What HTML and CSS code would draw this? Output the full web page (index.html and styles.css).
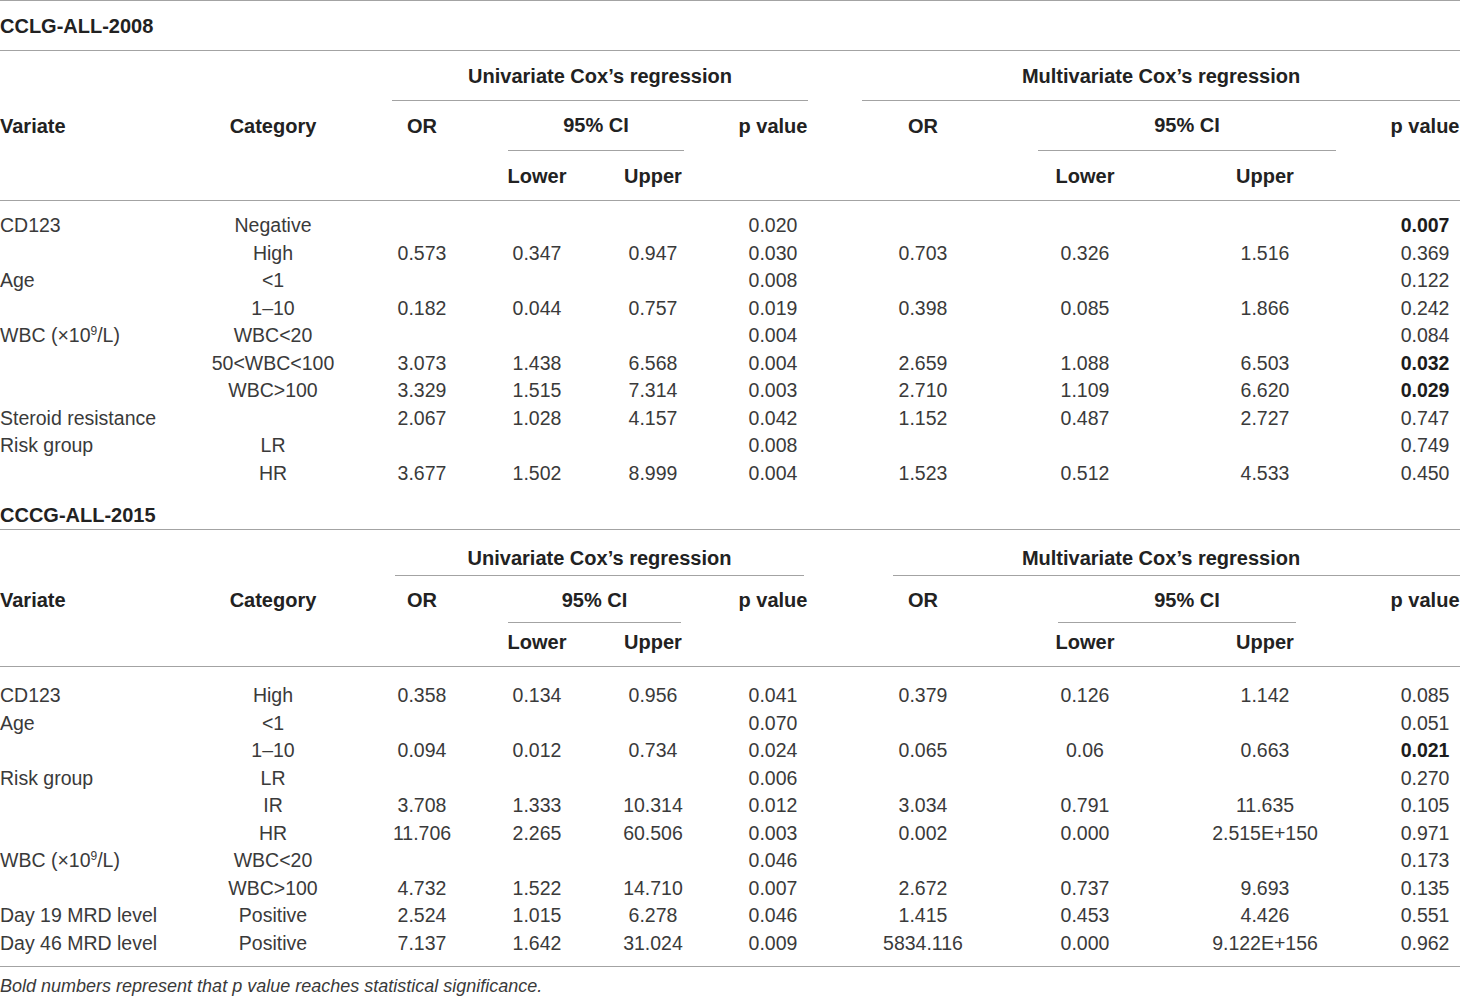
FILE: index.html
```html
<!DOCTYPE html>
<html lang="en">
<head>
<meta charset="utf-8">
<title>Cox regression</title>
<link rel="stylesheet" href="styles.css">
</head>
<body>
<table class="tbl s1">
<colgroup>
<col class="c1"><col class="c2"><col class="c3"><col class="c4"><col class="c5"><col class="c6"><col class="c7"><col class="c8"><col class="c9"><col class="c10">
</colgroup>
<thead>
<tr class="title-row"><th colspan="10" class="title">CCLG-ALL-2008</th></tr>
<tr class="grp-row">
<th colspan="2"></th>
<th colspan="4" class="grp"><div class="rule uni">Univariate Cox’s regression</div></th>
<th colspan="4" class="grp"><div class="rule multi">Multivariate Cox’s regression</div></th>
</tr>
<tr class="hd-row">
<th class="left">Variate</th><th>Category</th><th>OR</th>
<th colspan="2" class="grp"><div class="rule ci">95% CI</div></th>
<th>p value</th><th>OR</th>
<th colspan="2" class="grp"><div class="rule mci">95% CI</div></th>
<th>p value</th>
</tr>
<tr class="sub-row">
<th></th><th></th><th></th><th>Lower</th><th>Upper</th><th></th><th></th><th>Lower</th><th>Upper</th><th></th>
</tr>
</thead>
<tbody>
<tr class="first"><td class="left">CD123</td><td>Negative</td><td></td><td></td><td></td><td>0.020</td><td></td><td></td><td></td><td class="b">0.007</td></tr>
<tr><td class="left"></td><td>High</td><td>0.573</td><td>0.347</td><td>0.947</td><td>0.030</td><td>0.703</td><td>0.326</td><td>1.516</td><td>0.369</td></tr>
<tr><td class="left">Age</td><td>&lt;1</td><td></td><td></td><td></td><td>0.008</td><td></td><td></td><td></td><td>0.122</td></tr>
<tr><td class="left"></td><td>1–10</td><td>0.182</td><td>0.044</td><td>0.757</td><td>0.019</td><td>0.398</td><td>0.085</td><td>1.866</td><td>0.242</td></tr>
<tr><td class="left">WBC (×10<sup>9</sup>/L)</td><td>WBC&lt;20</td><td></td><td></td><td></td><td>0.004</td><td></td><td></td><td></td><td>0.084</td></tr>
<tr><td class="left"></td><td>50&lt;WBC&lt;100</td><td>3.073</td><td>1.438</td><td>6.568</td><td>0.004</td><td>2.659</td><td>1.088</td><td>6.503</td><td class="b">0.032</td></tr>
<tr><td class="left"></td><td>WBC&gt;100</td><td>3.329</td><td>1.515</td><td>7.314</td><td>0.003</td><td>2.710</td><td>1.109</td><td>6.620</td><td class="b">0.029</td></tr>
<tr><td class="left">Steroid resistance</td><td></td><td>2.067</td><td>1.028</td><td>4.157</td><td>0.042</td><td>1.152</td><td>0.487</td><td>2.727</td><td>0.747</td></tr>
<tr><td class="left">Risk group</td><td>LR</td><td></td><td></td><td></td><td>0.008</td><td></td><td></td><td></td><td>0.749</td></tr>
<tr><td class="left"></td><td>HR</td><td>3.677</td><td>1.502</td><td>8.999</td><td>0.004</td><td>1.523</td><td>0.512</td><td>4.533</td><td>0.450</td></tr>
</tbody>
</table>

<table class="tbl s2">
<colgroup>
<col class="c1"><col class="c2"><col class="c3"><col class="c4"><col class="c5"><col class="c6"><col class="c7"><col class="c8"><col class="c9"><col class="c10">
</colgroup>
<thead>
<tr class="title-row"><th colspan="10" class="title">CCCG-ALL-2015</th></tr>
<tr class="grp-row">
<th colspan="2"></th>
<th colspan="4" class="grp"><div class="rule uni">Univariate Cox’s regression</div></th>
<th colspan="4" class="grp"><div class="rule multi">Multivariate Cox’s regression</div></th>
</tr>
<tr class="hd-row">
<th class="left">Variate</th><th>Category</th><th>OR</th>
<th colspan="2" class="grp"><div class="rule ci">95% CI</div></th>
<th>p value</th><th>OR</th>
<th colspan="2" class="grp"><div class="rule mci">95% CI</div></th>
<th>p value</th>
</tr>
<tr class="sub-row">
<th></th><th></th><th></th><th>Lower</th><th>Upper</th><th></th><th></th><th>Lower</th><th>Upper</th><th></th>
</tr>
</thead>
<tbody>
<tr class="first"><td class="left">CD123</td><td>High</td><td>0.358</td><td>0.134</td><td>0.956</td><td>0.041</td><td>0.379</td><td>0.126</td><td>1.142</td><td>0.085</td></tr>
<tr><td class="left">Age</td><td>&lt;1</td><td></td><td></td><td></td><td>0.070</td><td></td><td></td><td></td><td>0.051</td></tr>
<tr><td class="left"></td><td>1–10</td><td>0.094</td><td>0.012</td><td>0.734</td><td>0.024</td><td>0.065</td><td>0.06</td><td>0.663</td><td class="b">0.021</td></tr>
<tr><td class="left">Risk group</td><td>LR</td><td></td><td></td><td></td><td>0.006</td><td></td><td></td><td></td><td>0.270</td></tr>
<tr><td class="left"></td><td>IR</td><td>3.708</td><td>1.333</td><td>10.314</td><td>0.012</td><td>3.034</td><td>0.791</td><td>11.635</td><td>0.105</td></tr>
<tr><td class="left"></td><td>HR</td><td>11.706</td><td>2.265</td><td>60.506</td><td>0.003</td><td>0.002</td><td>0.000</td><td>2.515E+150</td><td>0.971</td></tr>
<tr><td class="left">WBC (×10<sup>9</sup>/L)</td><td>WBC&lt;20</td><td></td><td></td><td></td><td>0.046</td><td></td><td></td><td></td><td>0.173</td></tr>
<tr><td class="left"></td><td>WBC&gt;100</td><td>4.732</td><td>1.522</td><td>14.710</td><td>0.007</td><td>2.672</td><td>0.737</td><td>9.693</td><td>0.135</td></tr>
<tr><td class="left">Day 19 MRD level</td><td>Positive</td><td>2.524</td><td>1.015</td><td>6.278</td><td>0.046</td><td>1.415</td><td>0.453</td><td>4.426</td><td>0.551</td></tr>
<tr class="last"><td class="left">Day 46 MRD level</td><td>Positive</td><td>7.137</td><td>1.642</td><td>31.024</td><td>0.009</td><td>5834.116</td><td>0.000</td><td>9.122E+156</td><td>0.962</td></tr>
</tbody>
</table>
<p class="note">Bold numbers represent that p value reaches statistical significance.</p>
</body>
</html>
```

FILE: styles.css
```css
* { box-sizing: border-box; }
html, body { margin: 0; padding: 0; background: #fff; }
body {
  width: 1460px;
  height: 997px;
  overflow: hidden;
  font-family: "Liberation Sans", Arial, Helvetica, sans-serif;
  color: #3a3a3a;
}
.tbl {
  width: 1460px;
  table-layout: fixed;
  border-collapse: separate;
  border-spacing: 0;
}
.c1 { width: 200px; }
.c2 { width: 146px; }
.c3 { width: 152px; }
.c4 { width: 78px; }
.c5 { width: 154px; }
.c6 { width: 86px; }
.c7 { width: 214px; }
.c8 { width: 110px; }
.c9 { width: 250px; }
.c10 { width: 70px; }

th, td {
  padding: 0;
  text-align: center;
  vertical-align: middle;
  white-space: nowrap;
}
th {
  font-size: 20px;
  font-weight: bold;
  color: #222;
  line-height: 22px;
}
td {
  font-size: 19.5px;
  font-weight: normal;
  height: 27.5px;
  line-height: 27.5px;
}
.left { text-align: left; }
td.b { font-weight: bold; color: #1c1c1c; }
sup { font-size: 12px; line-height: 0; vertical-align: 7px; }

.title { text-align: left; }
.rule { border-bottom: 1px solid #a3a3a3; }
.grp { vertical-align: bottom; }

/* section 1 */
.s1 .title-row th {
  height: 51px;
  border-top: 1px solid #a3a3a3;
  border-bottom: 1px solid #a3a3a3;
}
.s1 .grp-row th { height: 50px; }
.s1 .grp-row .rule { padding-bottom: 13px; }
.s1 .uni { margin: 0 8px 0 46px; }
.s1 .multi { margin: 0 0 0 46px; }
.s1 .hd-row th { height: 50px; }
.s1 .hd-row .rule { padding-bottom: 14px; }
.s1 .ci { margin: 0 46px 0 10px; }
.s1 .mci { margin: 0 54px 0 8px; }
.s1 .sub-row th { height: 50px; border-bottom: 1px solid #a3a3a3; }
.s1 tr.first td { height: 38.75px; padding-top: 11.25px; }

/* section 2 */
.s2 .title-row th {
  height: 42.75px;
  vertical-align: bottom;
  padding-bottom: 3px;
  border-bottom: 1px solid #a3a3a3;
}
.s2 .grp-row th { height: 46px; }
.s2 .grp-row .rule { padding-bottom: 6px; }
.s2 .uni { margin: 0 12px 0 49px; }
.s2 .multi { margin: 0 0 0 77px; padding-right: 31px; }
.s2 .hd-row th { height: 47px; }
.s2 .hd-row .rule { padding-bottom: 11px; }
.s2 .ci { margin: 0 49px 0 10px; }
.s2 .mci { margin: 0 94px 0 28px; padding-left: 20px; }
.s2 .sub-row th { height: 44px; padding-bottom: 6px; border-bottom: 1px solid #a3a3a3; }
.s2 tr.first td { height: 42.75px; padding-top: 15.25px; }
.s2 tr.last td { height: 36.25px; padding-bottom: 8.75px; border-bottom: 1px solid #a3a3a3; }

.note {
  margin: 8px 0 0 0;
  font-size: 18px;
  line-height: 22px;
  font-style: italic;
  color: #3a3a3a;
}
```
